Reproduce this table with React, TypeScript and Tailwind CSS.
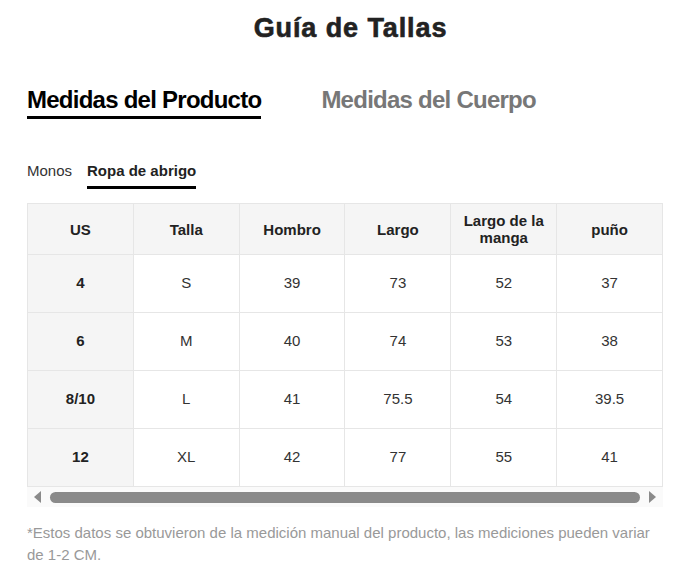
import { useState } from 'react'

const headers = ['US', 'Talla', 'Hombro', 'Largo', 'Largo de la manga', 'puño']

const rows: string[][] = [
  ['4', 'S', '39', '73', '52', '37'],
  ['6', 'M', '40', '74', '53', '38'],
  ['8/10', 'L', '41', '75.5', '54', '39.5'],
  ['12', 'XL', '42', '77', '55', '41'],
]

export default function App() {
  const [mainTab, setMainTab] = useState(0)
  const [subTab, setSubTab] = useState(1)

  return (
    <div className="w-[677px] bg-white px-[27px] pt-[13px] text-[#222]" style={{ fontFamily: '"Liberation Sans", Arial, sans-serif' }}>
      <h1 className="pl-[24px] text-center text-[27px] font-bold leading-[30px] tracking-[0.9px] text-[#222] [-webkit-text-stroke:0.6px_#222]">
        Guía de Tallas
      </h1>

      <div className="mt-[43px] flex gap-[60px]">
        {['Medidas del Producto', 'Medidas del Cuerpo'].map((t, i) => (
          <button
            key={t}
            onClick={() => setMainTab(i)}
            className={`pb-[2px] text-[24px] font-bold leading-[28px] tracking-[-0.75px] border-b-[3px] ${
              mainTab === i ? 'border-black text-black' : 'border-transparent text-[#777]'
            }`}
          >
            {t}
          </button>
        ))}
      </div>

      <div className="mt-[43px] flex gap-[15px]">
        {['Monos', 'Ropa de abrigo'].map((t, i) => (
          <button
            key={t}
            onClick={() => setSubTab(i)}
            className={`pb-[6px] text-[15px] leading-[18px] border-b-[3px] ${
              subTab === i ? 'border-black font-bold text-[#222]' : 'border-transparent text-[#333]'
            }`}
          >
            {t}
          </button>
        ))}
      </div>

      <div className="mt-[14px] w-[636px]">
        <table className="w-full table-fixed border-collapse text-[15px]">
          <thead>
            <tr className="h-[51px] bg-[#f5f5f5]">
              {headers.map(h => (
                <th key={h} className="border border-[#e6e6e6] px-2 font-bold leading-[17px] text-[#222]">
                  {h}
                </th>
              ))}
            </tr>
          </thead>
          <tbody>
            {rows.map(r => (
              <tr key={r[0]} className="h-[58px]">
                {r.map((c, j) => (
                  <td
                    key={j}
                    className={`border border-[#e6e6e6] text-center ${
                      j === 0 ? 'bg-[#f5f5f5] font-bold text-[#222]' : 'text-[#333]'
                    }`}
                  >
                    {c}
                  </td>
                ))}
              </tr>
            ))}
          </tbody>
        </table>

        <div className="flex h-[20px] items-center bg-[#fafafa] px-[6px]">
          <svg width="9" height="12" viewBox="0 0 9 12">
            <path d="M8 0 L8 12 L1 6 Z" fill="#8a8a8a" />
          </svg>
          <div className="mx-[8px] h-[11px] flex-1 rounded-full bg-[#8a8a8a]" />
          <svg width="9" height="12" viewBox="0 0 9 12">
            <path d="M1 0 L1 12 L8 6 Z" fill="#8a8a8a" />
          </svg>
        </div>
      </div>

      <p className="mt-[15px] text-[15px] leading-[22px] text-[#999]">
        *Estos datos se obtuvieron de la medición manual del producto, las mediciones pueden variar de 1-2 CM.
      </p>
    </div>
  )
}
